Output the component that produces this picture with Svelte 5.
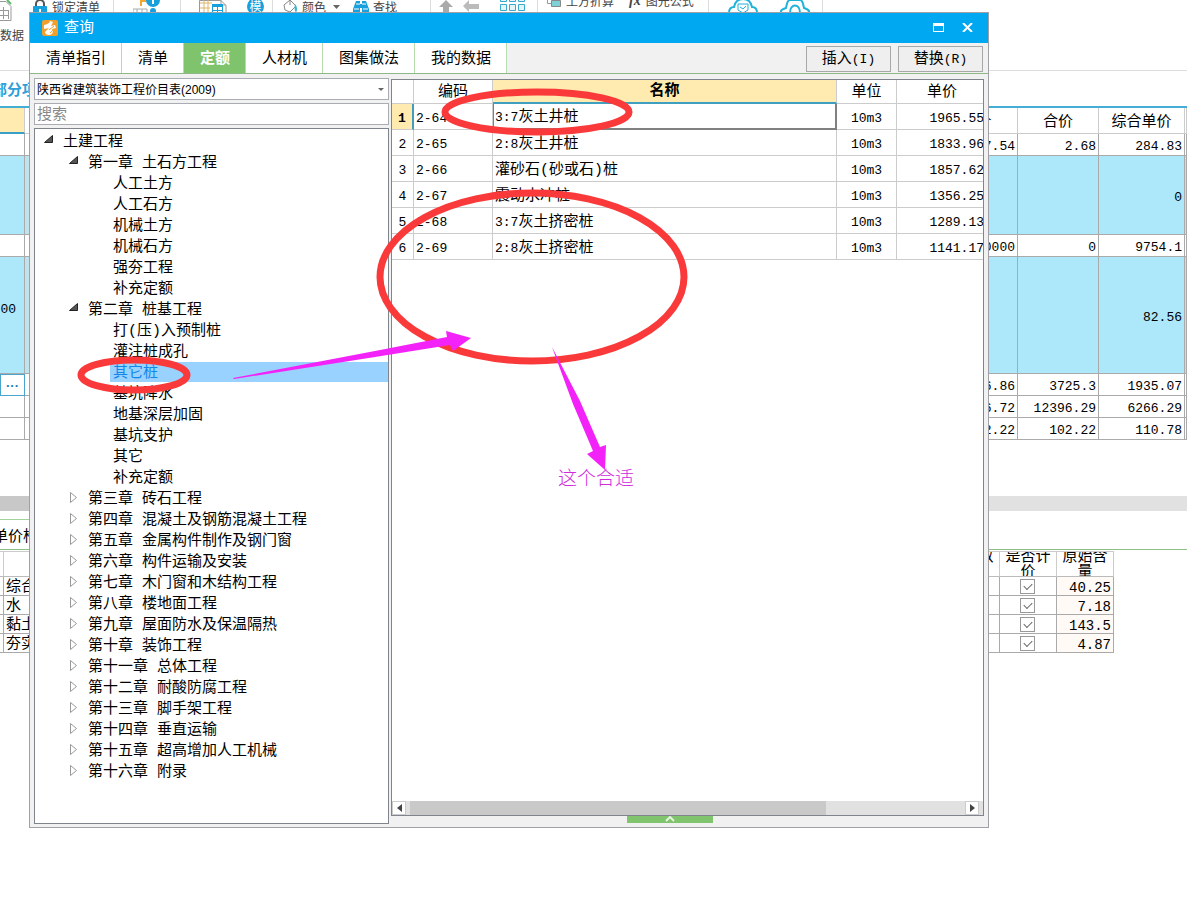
<script>
  const tabs = ['清单指引', '清单', '定额', '人材机', '图集做法', '我的数据'];
  let activeTab = $state('定额');

  const tree = [
    { level: 0, text: '土建工程', open: true },
    { level: 1, text: '第一章 土石方工程', open: true },
    { level: 2, text: '人工土方' },
    { level: 2, text: '人工石方' },
    { level: 2, text: '机械土方' },
    { level: 2, text: '机械石方' },
    { level: 2, text: '强夯工程' },
    { level: 2, text: '补充定额' },
    { level: 1, text: '第二章 桩基工程', open: true },
    { level: 2, text: '打(压)入预制桩' },
    { level: 2, text: '灌注桩成孔' },
    { level: 2, text: '其它桩', selected: true },
    { level: 2, text: '基坑降水' },
    { level: 2, text: '地基深层加固' },
    { level: 2, text: '基坑支护' },
    { level: 2, text: '其它' },
    { level: 2, text: '补充定额' },
    { level: 1, text: '第三章 砖石工程' },
    { level: 1, text: '第四章 混凝土及钢筋混凝土工程' },
    { level: 1, text: '第五章 金属构件制作及钢门窗' },
    { level: 1, text: '第六章 构件运输及安装' },
    { level: 1, text: '第七章 木门窗和木结构工程' },
    { level: 1, text: '第八章 楼地面工程' },
    { level: 1, text: '第九章 屋面防水及保温隔热' },
    { level: 1, text: '第十章 装饰工程' },
    { level: 1, text: '第十一章 总体工程' },
    { level: 1, text: '第十二章 耐酸防腐工程' },
    { level: 1, text: '第十三章 脚手架工程' },
    { level: 1, text: '第十四章 垂直运输' },
    { level: 1, text: '第十五章 超高增加人工机械' },
    { level: 1, text: '第十六章 附录' }
  ];

  const items = [
    { code: '2-64', ratio: '3:7', name: '灰土井桩', unit: '10m3', price: '1965.55' },
    { code: '2-65', ratio: '2:8', name: '灰土井桩', unit: '10m3', price: '1833.96' },
    { code: '2-66', ratio: '', name: '灌砂石(砂或石)桩', unit: '10m3', price: '1857.62' },
    { code: '2-67', ratio: '', name: '震动水冲桩', unit: '10m3', price: '1356.25' },
    { code: '2-68', ratio: '3:7', name: '灰土挤密桩', unit: '10m3', price: '1289.13' },
    { code: '2-69', ratio: '2:8', name: '灰土挤密桩', unit: '10m3', price: '1141.17' }
  ];

  const bill = [
    { kind: '', first: '', price: '7.54', total: '2.68', full: '284.83' },
    { kind: 'mid', first: '', price: '', total: '', full: '0' },
    { kind: '', first: '', price: '0.0000', total: '0', full: '9754.1' },
    { kind: 'tall', first: '00', price: '', total: '', full: '82.56' },
    { kind: 'edit', first: '···', price: '6.86', total: '3725.3', full: '1935.07' },
    { kind: '', first: '', price: '6.72', total: '12396.29', full: '6266.29' },
    { kind: '', first: '', price: '2.22', total: '102.22', full: '110.78' }
  ];

  const resources = [
    { name: '综合工日', amount: '40.25' },
    { name: '水', amount: '7.18' },
    { name: '黏土', amount: '143.5' },
    { name: '夯实机', amount: '4.87' }
  ];
</script>

<div class="app">
  <header class="ribbon">
    <div class="group g1">
      <svg class="sheet" width="14" height="22" viewBox="0 0 14 22" fill="none" stroke="#999">
        <path d="M0 1.5h6l5 5v14H0M0 10.5h8M0 15.5h8M3.5 7v12M8.5 10v9" /><path d="M7 0l4 4" stroke="#5fb96a" stroke-width="2" />
      </svg>
      <svg class="lock" width="16" height="16" viewBox="0 0 16 16">
        <path d="M4 7V4a4 4 0 0 1 8 0v3" fill="none" stroke="#555" stroke-width="2" /><rect x="1" y="6" width="14" height="10" rx="1" fill="#18a0dc" /><path d="M8 9v4" stroke="#fff" stroke-width="2" />
      </svg>
      <span>锁定清单</span>
      <span class="below">数据</span>
    </div>
    <div class="group g2">
      <svg width="28" height="14" viewBox="0 0 28 14">
        <path d="M0 13V9h14v4M4 9v4M9 9v4" fill="none" stroke="#aaa" /><path d="M8 6V1h6" fill="none" stroke="#f0a832" stroke-width="2" /><circle cx="20" cy="0" r="7" fill="#18a0dc" /><path d="M20 0v4" stroke="#fff" stroke-width="2" /><circle cx="20" cy="11" r="3" fill="#18a0dc" />
      </svg>
    </div>
    <div class="group g3">
      <svg width="28" height="14" viewBox="0 0 28 14" fill="none">
        <path d="M.5 14V.5H22l5 5V14" stroke="#999" /><path d="M1 3h12M5 0v14M9 0v14M1 8h10" stroke="#e2b56b" /><path d="M22 0v5h5" stroke="#999" /><path d="M13 4h11v3H13z" fill="#18a0dc" /><path d="M13.500 4v10M18.500 4v10M23.500 4v10M13 10.500h11" stroke="#18a0dc" />
      </svg>
      <span class="badge">模</span>
    </div>
    <div class="group g4">
      <svg width="15" height="13" viewBox="0 0 15 13"><path d="M1 5l6-5 6 6-6 6-5-2z" fill="#fff" stroke="#888" /><path d="M7 0v5" stroke="#888" /><path d="M12 4c3 3 2 8 1 8s-2-3-1-8" fill="#3ab7d8" /></svg>
      <span>颜色</span>
      <svg class="caret" width="7" height="4" viewBox="0 0 7 4"><path d="M0 0h7L3.500 4z" fill="#666" /></svg>
      <svg width="16" height="13" viewBox="0 0 16 13" fill="#18a0dc"><path d="M3 1h4v12H0V9zM9 1h4l3 8v4H9z" /><path d="M6 4h4v4H6z" /><path d="M1 9h5M10 9h5M3 4h4M9 4h4" stroke="#fff" /></svg>
      <span>查找</span>
    </div>
    <div class="group g5">
      <svg width="14" height="13" viewBox="0 0 14 13"><path d="M7 0l7 7h-4v6H4V7H0z" fill="#aaa" /></svg>
      <svg width="16" height="12" viewBox="0 0 16 12"><path d="M0 6l6-6v4h10v5H6v3z" fill="#bbb" /></svg>
      <svg width="26" height="12" viewBox="0 0 26 12" fill="#e3f5fb" stroke="#3aa9cf"><path d="M.5-4.500h6v6h-6zM9.500-4.500h6v6h-6zM18.500-4.500h6v6h-6zM.5 4.500h6v6h-6zM9.500 4.500h6v6h-6zM18.500 4.500h6v6h-6z" /></svg>
    </div>
    <div class="group g6">
      <svg width="14" height="8" viewBox="0 0 14 8"><path d="M.5-2.500h8v6h-8z" fill="#fff" stroke="#999" /><path d="M4.500.5h9v6h-9z" fill="#7fd1d8" stroke="#888" /></svg>
      <span>土方折算</span>
      <i>fx</i>
      <span>图元公式</span>
    </div>
    <div class="group g7">
      <svg width="30" height="14" viewBox="0 0 30 14" fill="none" stroke="#20b2d8" stroke-width="2"><path d="M1 13c0-4 2-6 5-6 1-5 4-8 9-8s8 3 9 8c3 0 5 2 5 6" /><path d="M10 4h10v6l-5 3-5-3zM12 7l3 2 3-3" stroke-width="1" /></svg>
      <svg width="30" height="14" viewBox="0 0 30 14" fill="none" stroke="#20b2d8" stroke-width="2"><path d="M1 13c-1-3 2-4 5-5 1-4 1-8 4-8h10c3 0 3 4 4 8 3 1 6 2 5 5" /><path d="M10 13c0-10 10-10 10 0" /></svg>
    </div>
  </header>

  <nav class="sections"><a href="#bill">分部分项</a></nav>

  <table class="bill">
    <colgroup><col class="w-first" /><col /><col class="w-price" /><col class="w-total" /><col class="w-full" /><col class="w-rest" /></colgroup>
    <thead>
      <tr><th class="picked"></th><th></th><th>单价</th><th>合价</th><th>综合单价</th><th></th></tr>
    </thead>
    <tbody>
      {#each bill as row}
        <tr class={row.kind}>
          <td class="first">{row.first}</td><td class="fill"></td>
          <td>{row.price}</td><td>{row.total}</td><td>{row.full}</td><td></td>
        </tr>
      {/each}
    </tbody>
  </table>

  <div class="split"><span></span></div>
  <div class="detail-tabs"><span>单价构成</span></div>

  <table class="resources">
    <colgroup><col class="w-edge" /><col /><col class="w-check" /><col class="w-check" /><col class="w-check" /></colgroup>
    <thead>
      <tr><th></th><th></th><th><div>工程数量</div></th><th><div>是否计价</div></th><th><div>原始含量</div></th></tr>
    </thead>
    <tbody>
      {#each resources as row}
        <tr>
          <td></td><td class="res-name">{row.name}</td><td></td>
          <td class="tick"><input type="checkbox" checked aria-label={row.name} /></td>
          <td class="amount">{row.amount}</td>
        </tr>
      {/each}
    </tbody>
  </table>

  <section class="dialog" aria-label="查询">
    <div class="title">
      <svg width="16" height="16" viewBox="0 0 16 16"><rect width="16" height="16" rx="2" fill="#f2a02c" /><path d="M2 5c3-1 5-1 6-4l3 1-2 4 4-1 1 3-4 1c2 3 0 6-3 6-2 0-4-1-4-3l4-4-5 1z" fill="#fff" /><path d="M7 10l5-4M8 13l3-3" stroke="#f2a02c" /></svg>
      <h1>查询</h1>
      <button aria-label="最大化"><svg width="11" height="9" viewBox="0 0 11 9"><path d="M0 0h11v9H0zM1 3v5h9V3z" fill="#fff" fill-rule="evenodd" /></svg></button>
      <button aria-label="关闭"><svg width="11" height="9" viewBox="0 0 11 9"><path d="M1 0l9 9M10 0L1 9" stroke="#fff" stroke-width="2" /></svg></button>
    </div>

    <div class="bar">
      {#each tabs as tab}
        <button class="tab" class:active={tab === activeTab} onclick={() => (activeTab = tab)}>{tab}</button>
      {/each}
      <div class="actions">
        <button>插入<span class="num">(I)</span></button>
        <button>替换<span class="num">(R)</span></button>
      </div>
    </div>

    <div class="body">
      <div class="left">
        <div class="picker">
          <select aria-label="定额库"><option>陕西省建筑装饰工程价目表(2009)</option></select>
          <svg width="6" height="3" viewBox="0 0 6 3"><path d="M0 0h6L3 3z" fill="#666" /></svg>
        </div>
        <input class="search" type="text" placeholder="搜索" aria-label="搜索" />
        <ul class="tree">
          {#each tree as node}
            <li class="l{node.level}">
              {#if node.open}
                <svg width="9" height="8" viewBox="0 0 9 8"><path d="M8.500.5v7H.5z" fill="#555" stroke="#222" /></svg>
              {:else if node.level === 1}
                <svg width="9" height="11" viewBox="0 0 9 11"><path d="M1.500.5v10L7.500 5.500z" fill="#fff" stroke="#999" /></svg>
              {/if}
              <span class:selected={node.selected}>{node.text}</span>
            </li>
          {/each}
        </ul>
      </div>

      <div class="right">
        <div class="results">
          <div class="clip">
            <table class="quota">
              <colgroup><col class="w-idx" /><col class="w-code" /><col /><col class="w-unit" /><col class="w-cost" /></colgroup>
              <thead><tr><th></th><th>编码</th><th class="sorted">名称</th><th>单位</th><th>单价</th></tr></thead>
              <tbody>
                {#each items as item, i}
                  <tr class:current={i === 0}>
                    <td class="idx">{i + 1}</td>
                    <td class="code">{item.code}</td>
                    <td class="name"><span class="num">{item.ratio}</span>{item.name}</td>
                    <td class="unit">{item.unit}</td>
                    <td class="cost">{item.price}</td>
                  </tr>
                {/each}
              </tbody>
            </table>
          </div>
          <div class="hscroll">
            <button aria-label="向左"><svg width="5" height="8" viewBox="0 0 5 8"><path d="M5 0v8L0 4z" fill="#444" /></svg></button>
            <div class="track"><div class="thumb"></div></div>
            <button aria-label="向右"><svg width="5" height="8" viewBox="0 0 5 8"><path d="M0 0v8l5-4z" fill="#444" /></svg></button>
          </div>
        </div>
        <button class="expand" aria-label="展开"><svg width="10" height="6" viewBox="0 0 10 6"><path d="M1 5l4-4 4 4" fill="none" stroke="#e4f5dd" stroke-width="2" /></svg></button>
      </div>
    </div>
  </section>

  <svg class="marks">
    <g fill="none" stroke="#fa3a3a" stroke-width="7">
      <ellipse cx="134" cy="375" rx="53" ry="15" />
      <ellipse cx="537" cy="112" rx="92" ry="20" />
      <ellipse cx="532" cy="277" rx="152" ry="84" />
    </g>
    <g fill="#f222f8">
      <path d="M233 378L375 351 447 337 446 331 471 338 453 351 450 345 375 357 234 379z" />
      <path d="M552 347L580 401 600 447 606 445 605 470 587 454 593 451 573 404z" />
    </g>
    <text x="558" y="485">这个合适</text>
  </svg>
</div>

<style>
  :global(body) { margin: 0; background: #fff; }
  .app {
    position: relative;
    min-height: 100vh;
    overflow: hidden;
    font: 15px/20px "Liberation Mono", "Noto Sans CJK SC", monospace;
    color: #000;
  }
  .app :global(*) { box-sizing: border-box; }
  button, input, select { font: inherit; color: inherit; margin: 0; border-radius: 0; }
  button { padding: 0; border: 0; background: none; }
  svg { display: block; flex: none; }
  h1 { margin: 0; font-size: 15px; font-weight: 400; }
  table { border-collapse: separate; border-spacing: 0; table-layout: fixed; width: 100%; }
  th, td { padding: 0; font-weight: 400; overflow: hidden; white-space: nowrap; }
  .num { font-size: 13px; }

  .ribbon {
    display: flex;
    height: 71px;
    border-bottom: 1px solid #ddd;
    font-family: "Noto Sans CJK SC", sans-serif;
    font-size: 12px;
    line-height: 14px;
    color: #444;
  }
  .group { display: flex; align-items: flex-start; height: 42px; border-right: 1px solid #ddd; white-space: nowrap; }
  .g1 { width: 114px; flex-wrap: wrap; row-gap: 6px; }
  .g2 { width: 67px; padding-left: 19px; }
  .g3 { width: 92px; padding-left: 18px; gap: 20px; }
  .g4 { width: 158px; padding-left: 10px; gap: 4px; }
  .g4 .caret { margin: 5px 9px 0 3px; }
  .g5 { width: 107px; padding-left: 8px; gap: 10px; }
  .g5 svg:last-child { margin-left: 11px; }
  .g6 { width: 171px; padding-left: 9px; gap: 5px; line-height: 2px; }
  .g6 i { margin-left: 10px; font-family: "Liberation Serif", serif; font-size: 14px; font-weight: 700; }
  .g7 { width: 114px; padding-left: 19px; gap: 22px; }
  .lock { margin: 0 4px 0 18px; }
  .below { width: 100%; }
  .badge { width: 17px; height: 17px; margin-top: -2px; border-radius: 9px; background: #18a0dc; color: #fff; text-align: center; line-height: 16px; }

  .sections { height: 37px; padding-top: 11px; border-bottom: 2px solid #45aed6; }
  .sections a { display: block; width: 60px; margin-left: -23px; color: #2e9fd8; font-weight: 700; text-decoration: none; }

  .bill th, .bill td { height: 22px; border-right: 1px solid #aaa; border-bottom: 1px solid #aaa; }
  .bill th { height: 26px; padding-top: 4px; border-color: #ccc; }
  .bill td { padding: 4px 2px 0; text-align: right; font-size: 13px; line-height: 17px; }
  .bill .picked { background: #ffebb0; border-bottom: 2px solid #3a9fc8; }
  .bill .mid td { height: 79px; background: #ade8fa; }
  .bill .tall td { height: 117px; background: #ade8fa; }
  .bill .mid .fill, .bill .tall .fill { background: #c0e4ee; }
  .bill .first { padding: 0 8px 0 0; }
  .bill .tall .first { padding-bottom: 12px; }
  .bill .edit .first { padding: 0; text-align: center; font-family: "Liberation Sans", sans-serif; font-weight: 700; color: #1e7fc0; border: 1px solid #4aa5cc; }
  .w-first { width: 25px; }
  .w-price { width: 82px; }
  .w-total { width: 81px; }
  .w-full { width: 86px; }
  .w-rest { width: 2px; }

  .split { display: flex; height: 15px; margin-top: 56px; background: #e1e1e1; }
  .split span { width: 50%; background: #c8c8c8; }
  .detail-tabs { height: 39px; padding-top: 8px; border-bottom: 1px solid #8cc084; }
  .detail-tabs span { display: block; width: 110px; height: 30px; border-top: 1px solid #a4d29c; line-height: 35px; text-indent: -7px; }

  .resources { width: calc(100% - 73px); margin-top: 1px; }
  .resources th { height: 26px; border-top: 1px solid #ccc; border-right: 1px solid #ccc; border-bottom: 1px solid #bbb; white-space: normal; }
  .resources th div { display: flex; align-items: center; height: 24px; padding: 2px 4px 0; line-height: 15px; text-align: center; }
  .resources td { height: 19px; border-right: 1px solid #aaa; border-bottom: 1px solid #aaa; line-height: 14px; }
  .resources .res-name { padding: 4px 0 0 2px; }
  .resources .tick { padding: 0 0 0 20px; }
  .resources .amount { padding: 4px 2px 0 0; background: #fffaf6; text-align: right; font-size: 14px; }
  .resources input { display: block; appearance: none; width: 15px; height: 15px; border: 1px solid #999; background: #fff; }
  .resources input::after { content: ""; display: block; width: 7px; height: 4px; margin: 3px; border: solid #666; border-width: 0 0 1px 1px; transform: rotate(-45deg); }
  .resources input:not(:checked)::after { visibility: hidden; }
  .w-edge { width: 4px; }
  .w-check { width: 57px; }

  .dialog {
    position: absolute;
    top: 12px;
    left: 29px;
    right: 198px;
    bottom: 81px;
    display: flex;
    flex-direction: column;
    border: 1px solid #a0a0a6;
    background: #f1f1f1;
  }
  .title { display: flex; align-items: center; height: 30px; padding: 0 15px 0 12px; background: #00a8f2; color: #fff; }
  .title h1 { flex: 1; padding: 2px 0 0 6px; }
  .title button { width: 29px; height: 30px; padding-bottom: 2px; display: flex; align-items: center; justify-content: flex-end; }
  .bar { display: flex; height: 31px; border-bottom: 1px solid #8fb888; }
  .tab { padding: 4px 15px 0 16px; border-right: 1px solid #b7dcae; background: #fff; }
  .tab.active { background: #7fc46c; color: #fff; font-weight: 700; }
  .actions { display: flex; gap: 7px; margin: 3px 5px 1px auto; }
  .actions button { width: 85px; height: 26px; padding-top: 2px; border: 1px solid #a8a8a8; background: #efefef; }

  .body { flex: 1; display: flex; gap: 2px; min-height: 0; padding: 4px 4px 3px; }
  .left { width: 355px; display: flex; flex-direction: column; gap: 3px; }
  .picker { display: grid; align-items: center; justify-items: end; }
  .picker > * { grid-area: 1 / 1; }
  .picker svg { margin-right: 5px; pointer-events: none; }
  .picker select { width: 100%; height: 22px; padding: 1px 2px 0; appearance: none; border: 1px solid #a9adb3; background: #fff; font-family: "Liberation Sans", "Noto Sans CJK SC", sans-serif; font-size: 12px; }
  .search { width: 100%; height: 22px; padding: 2px 2px 0; border: 1px solid #a9adb3; background: #fff; }
  .search::placeholder { color: #888; opacity: 1; }
  .tree { flex: 1; margin: 0; padding: 2px 0 0; overflow: hidden; list-style: none; border: 1px solid #80848c; background: #fff; }
  .tree li { display: flex; height: 21px; line-height: 23px; white-space: nowrap; }
  .tree svg { margin: 4px 10px 0 0; }
  .l0 { padding-left: 9px; }
  .l1 { padding-left: 34px; }
  .l2 { padding-left: 75px; }
  .tree span { padding: 0 3px; }
  .tree .l0 span, .tree .l1 span { padding-left: 0; }
  .tree .selected { flex: 1; height: 20px; background: #99d1ff; color: #1086e8; }

  .right { flex: 1; min-width: 0; display: flex; flex-direction: column; align-items: center; margin-top: 1px; }
  .results { flex: 1; width: 100%; min-height: 0; display: flex; flex-direction: column; border: 1px solid #80848c; background: #fff; }
  .clip { flex: 1; min-height: 0; overflow: hidden; }
  .quota { width: calc(100% + 5px); }
  .quota th, .quota td { border-right: 1px solid #ccc; border-bottom: 1px solid #ccc; }
  .quota th { height: 24px; padding-top: 3px; }
  .quota .sorted { padding-top: 2px; background: #ffebb0; border-bottom: 2px solid #3f9fc0; font-weight: 700; }
  .quota td { height: 26px; padding-top: 4px; font-size: 13px; }
  .quota .idx { text-align: center; }
  .quota .code { padding-left: 2px; }
  .quota .name { padding-top: 5px; padding-left: 2px; font-size: 15px; }
  .quota .unit { text-align: center; }
  .quota .cost { padding-right: 3px; text-align: right; }
  .quota .current .idx { background: #ffebb0; border-right: 2px solid #3f9fc0; font-weight: 700; }
  .quota .current .name { padding-top: 4px; padding-left: 1px; border: solid #808080; border-width: 0 2px 2px 1px; }
  .w-idx { width: 22px; }
  .w-code { width: 79px; }
  .w-unit { width: 60px; }
  .w-cost { width: 91px; }
  .hscroll { display: flex; height: 14px; padding-right: 4px; background: #e1e1e1; }
  .hscroll button { width: 14px; height: 14px; display: flex; align-items: center; justify-content: center; border: 1px solid #ccc; background: #fff; }
  .track { flex: 1; padding-left: 4px; }
  .thumb { width: 75%; height: 14px; background: #c9c9c9; }
  .expand { width: 86px; height: 7px; margin: 0 0 1px -36px; display: flex; justify-content: center; background: #80c46e; }

  .marks { position: absolute; inset: 0; width: 100%; height: 100%; pointer-events: none; }
  .marks text { font-family: "Noto Sans CJK SC", sans-serif; font-size: 19px; font-weight: 300; fill: #cf2bdc; }
</style>
